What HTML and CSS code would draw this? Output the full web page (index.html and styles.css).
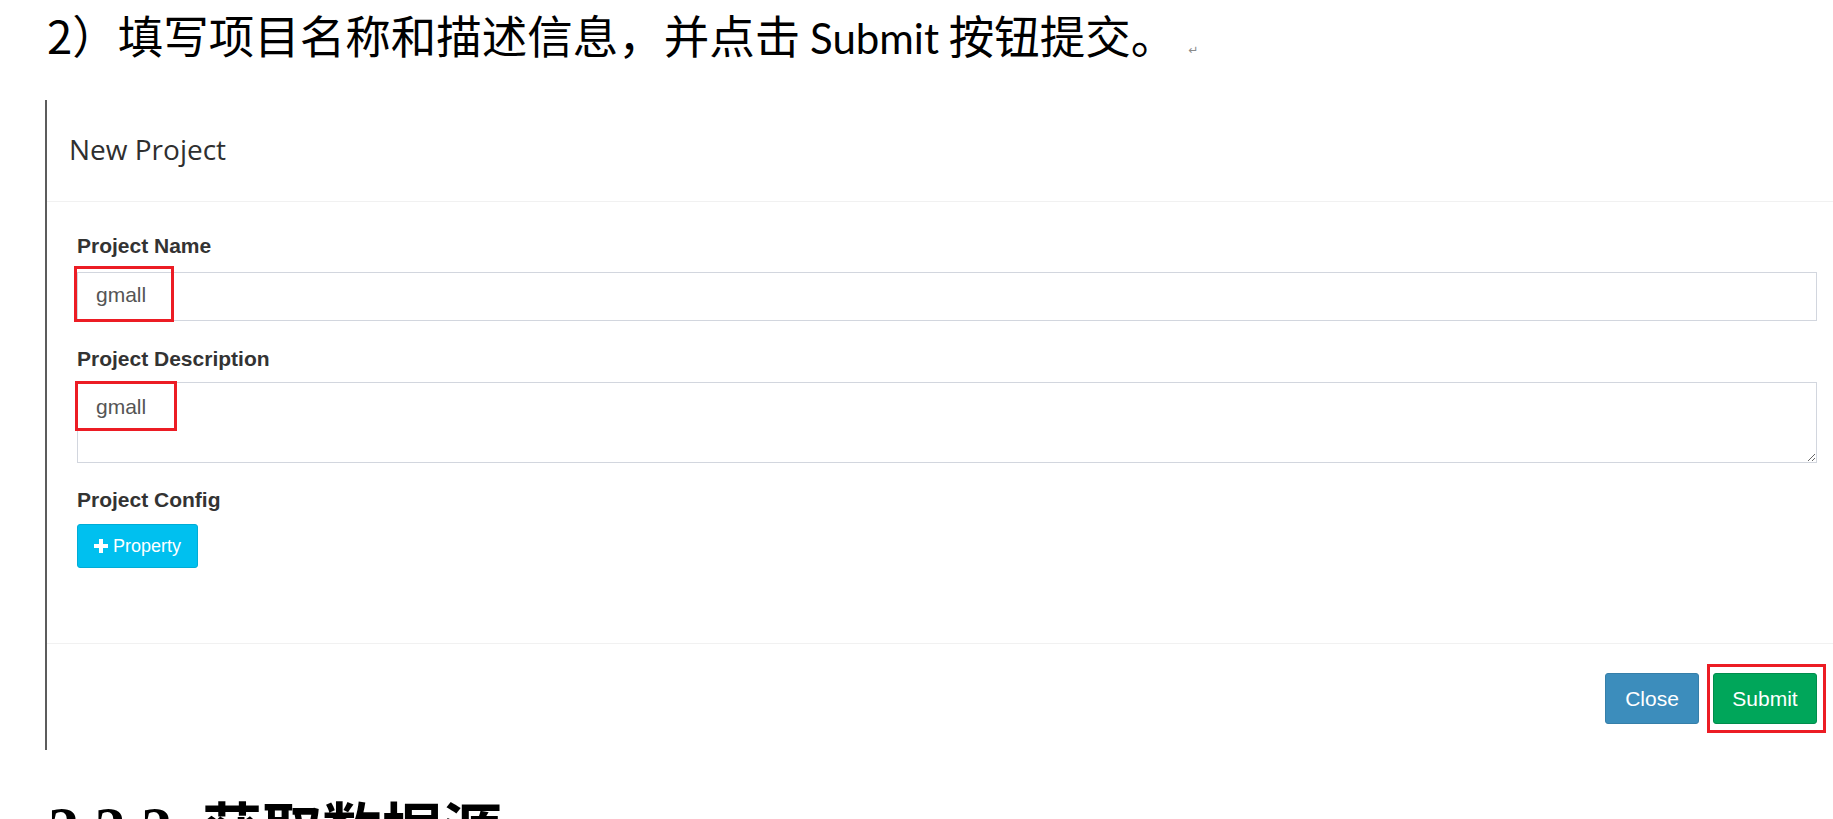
FILE: index.html
```html
<!DOCTYPE html>
<html lang="zh-CN">
<head>
<meta charset="utf-8">
<title>New Project</title>
<link rel="stylesheet" href="styles.css">
</head>
<body>
  <p class="intro">2）填写项目名称和描述信息，并点击<span class="latin"> Submit </span>按钮提交。<span class="return-mark">↵</span></p>

  <div class="modal">
    <div class="modal-header">
      <h4 class="modal-title">New Project</h4>
    </div>
    <div class="modal-body">
      <div class="form-group group-name">
        <label class="field-label">Project Name</label>
        <div class="marked">
          <input class="form-control" type="text" value="gmall" readonly>
          <span class="highlight hl-name"></span>
        </div>
      </div>
      <div class="form-group group-desc">
        <label class="field-label label-desc">Project Description</label>
        <div class="marked">
          <textarea class="form-control textarea" readonly>gmall</textarea>
          <span class="highlight hl-desc"></span>
        </div>
      </div>
      <div class="form-group group-config">
        <label class="field-label label-config">Project Config</label>
        <button class="btn btn-info" type="button">
          <svg class="plus-icon" width="14" height="14" viewBox="0 0 14 14" aria-hidden="true">
            <rect x="5" y="0" width="4" height="14" fill="#fff"/>
            <rect x="0" y="5" width="14" height="4" fill="#fff"/>
          </svg>
          <span>Property</span>
        </button>
      </div>
    </div>
    <div class="modal-footer">
      <button class="btn btn-primary btn-lg" type="button">Close</button>
      <span class="marked">
        <button class="btn btn-success btn-lg" type="button">Submit</button>
        <span class="highlight hl-submit"></span>
      </span>
    </div>
  </div>

  <h2 class="section-title"><span class="num">2.2.2</span>&nbsp;&nbsp;获取数据源</h2>
</body>
</html>
```

FILE: styles.css
```css
html, body {
  margin: 0;
  padding: 0;
  background: #ffffff;
}

body {
  height: 819px;
  overflow: hidden;
}

.intro {
  margin: 0;
  box-sizing: border-box;
  height: 100px;
  padding: 4px 0 0 47px;
  font-family: "Noto Sans CJK SC", "Noto Sans", sans-serif;
  font-size: 45.5px;
  line-height: 60px;
  color: #000;
  white-space: nowrap;
}

.latin {
  font-family: Lato, "Noto Sans", sans-serif;
  font-size: 42px;
  word-spacing: -1px;
}

.return-mark {
  font-family: "DejaVu Sans", sans-serif;
  font-size: 12px;
  color: #8a8a8a;
  margin-left: 12px;
}

.modal {
  margin-left: 45px;
  border-left: 2px solid #5c5c5c;
  height: 650px;
  box-sizing: border-box;
}

.modal-header {
  padding: 32px 24px 35px 22px;
  border-bottom: 1px solid #f1f1f1;
}

.modal-title {
  margin: 0;
  font-family: "Open Sans", "Noto Sans", sans-serif;
  font-weight: 400;
  font-size: 28px;
  line-height: 34px;
  color: #2f2f2f;
}

.modal-body {
  padding: 31px 16px 75px 30px;
  font-family: "Liberation Sans", Arial, sans-serif;
}

.form-group {
  display: flex;
  flex-direction: column;
  align-items: stretch;
}

.group-desc {
  margin-top: 25px;
}

.group-config {
  margin-top: 24px;
  align-items: flex-start;
}

.field-label {
  display: block;
  font-weight: 700;
  font-size: 21px;
  line-height: 25px;
  color: #333;
  margin-bottom: 14px;
}

.label-desc {
  margin-bottom: 11px;
}

.label-config {
  margin-bottom: 12px;
}

.marked {
  position: relative;
  display: block;
}

.form-control {
  display: block;
  box-sizing: border-box;
  width: 100%;
  margin: 0;
  border: 1px solid #d2d6de;
  border-radius: 0;
  background: #fff;
  font-family: "Liberation Sans", Arial, sans-serif;
  font-size: 21px;
  color: #555;
  outline: none;
}

input.form-control {
  height: 49px;
  padding: 0 18px 3px 18px;
}

.textarea {
  height: 81px;
  padding: 12px 18px;
  resize: vertical;
  line-height: normal;
}

.highlight {
  position: absolute;
  box-sizing: border-box;
  border: 3px solid #ec1c24;
  pointer-events: none;
}

.hl-name {
  left: -3px;
  top: -6px;
  width: 100px;
  height: 56px;
}

.hl-desc {
  left: -2px;
  top: -1px;
  width: 102px;
  height: 50px;
}

.hl-submit {
  left: -6px;
  top: -9px;
  width: 119px;
  height: 69px;
}

.btn {
  display: inline-flex;
  align-items: center;
  justify-content: center;
  box-sizing: border-box;
  margin: 0;
  border: 1px solid transparent;
  border-radius: 3px;
  font-family: "Liberation Sans", Arial, sans-serif;
  color: #fff;
  cursor: pointer;
}

.btn-info {
  height: 44px;
  padding: 0 16px 0 16px;
  gap: 5px;
  font-size: 18px;
  background: #00c0ef;
  border-color: #00acd6;
}

.plus-icon {
  display: block;
}

.modal-footer {
  display: flex;
  justify-content: flex-end;
  align-items: center;
  gap: 14px;
  padding: 29px 16px 26px 0;
  border-top: 1px solid #f1f1f1;
}

.btn-lg {
  height: 51px;
  padding: 0 19px;
  font-size: 21px;
}

.btn-primary {
  width: 94px;
  background: #3c8dbc;
  border-color: #367fa9;
}

.btn-success {
  width: 104px;
  background: #00a65a;
  border-color: #008d4c;
}

.section-title {
  margin: 48px 0 0 48px;
  font-family: "Liberation Serif", "Noto Sans CJK SC", serif;
  font-weight: 700;
  font-size: 60px;
  line-height: 60px;
  color: #000;
  white-space: nowrap;
}

.num {
  font-size: 62px;
  vertical-align: 4px;
}
```
